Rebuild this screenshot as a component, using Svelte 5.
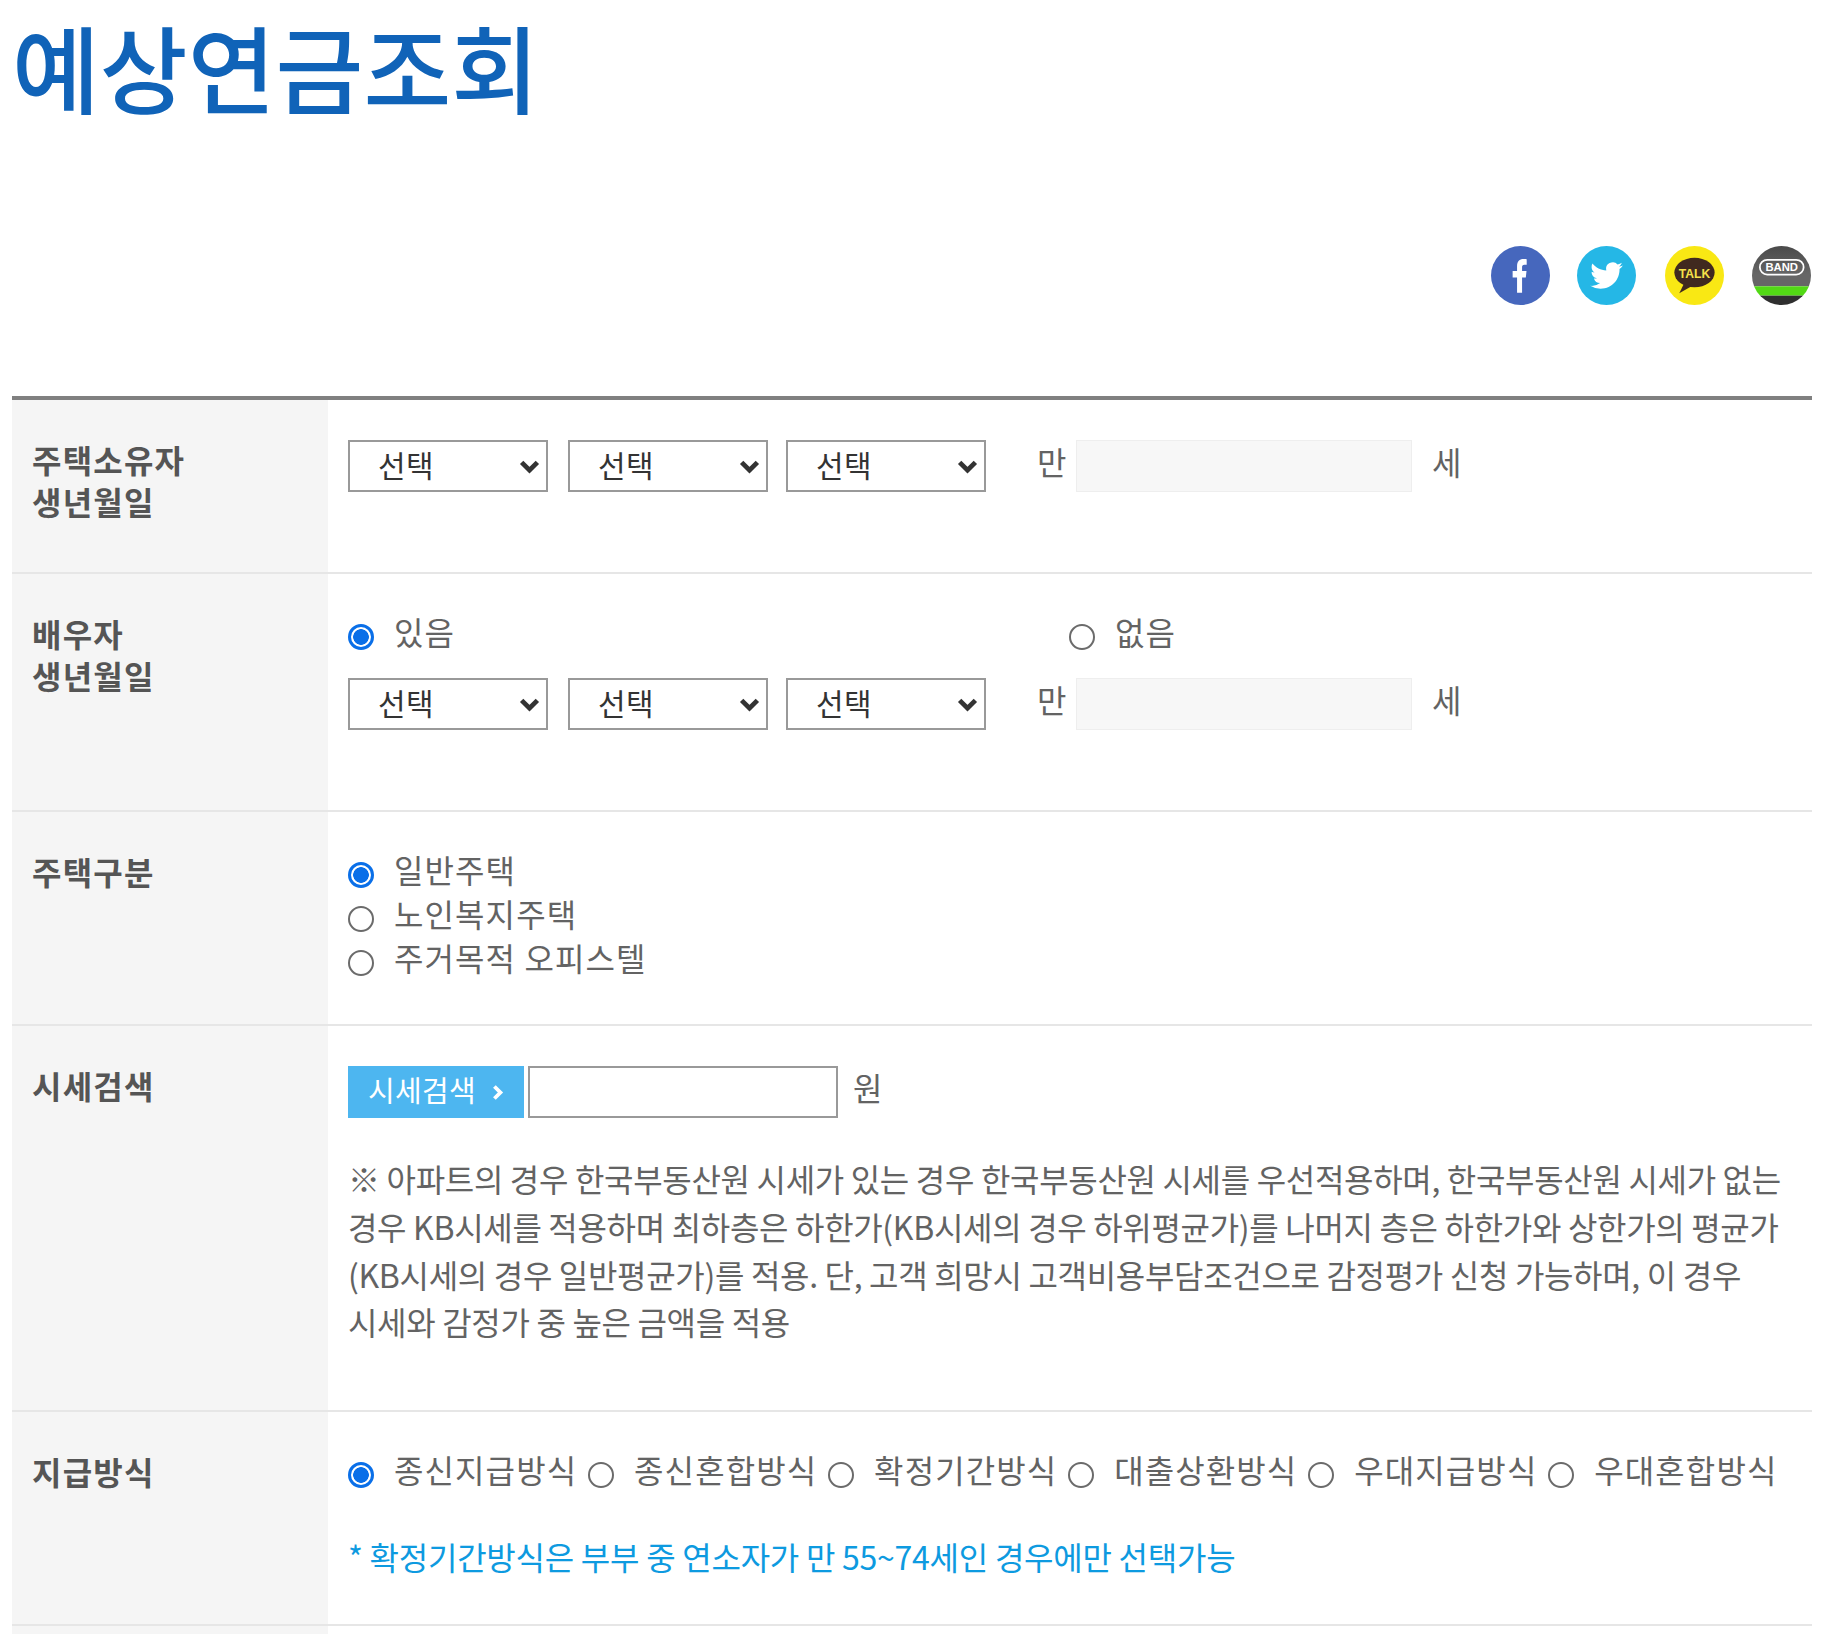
<script lang="ts">
  const payTypes = ['종신지급방식', '종신혼합방식', '확정기간방식', '대출상환방식', '우대지급방식', '우대혼합방식'];
  const houseTypes = ['일반주택', '노인복지주택', '주거목적 오피스텔'];
</script>

{#snippet birthSelects(name: string)}
  <div class="birth">
    {#each ['y', 'm', 'd'] as part}
      <div class="select-wrap">
        <select name={name + part}><option>선택</option></select>
        <svg class="chevron" viewBox="0 0 16 12" aria-hidden="true">
          <path d="M2 2.500 8 8.500l6-6" fill="none" stroke="#333" stroke-width="3.600" />
        </svg>
      </div>
    {/each}
    <span class="man">만</span>
    <input class="age" type="text" readonly />
    <span class="sae">세</span>
  </div>
{/snippet}

<div class="page">
  <h1>예상연금조회</h1>

  <div class="share">
    <svg viewBox="0 0 60 60" aria-label="facebook">
      <circle cx="30" cy="30" r="30" fill="#4667bd" />
      <path d="M26.500 47.500V32H22v-6.500h4.500v-5c0-4.800 2.500-7.200 6.500-7.200 1.600 0 2.800.1 3.300.2v5.600H34c-1.900 0-2.400 1-2.400 2.600v3.800h4.500l-.7 6.500h-3.800v15.500z" fill="#fff" />
    </svg>
    <svg viewBox="0 0 60 60" aria-label="twitter">
      <circle cx="30" cy="30" r="30" fill="#25b7e6" />
      <g transform="translate(13.500 13.500) scale(1.38)">
        <path fill="#fff" d="M23.953 4.570a10 10 0 01-2.825.775 4.958 4.958 0 002.163-2.723c-.951.555-2.005.959-3.127 1.184a4.920 4.920 0 00-8.384 4.482C7.690 8.095 4.067 6.130 1.640 3.162a4.822 4.822 0 00-.666 2.475c0 1.710.870 3.213 2.188 4.096a4.904 4.904 0 01-2.228-.616v.060a4.923 4.923 0 003.946 4.827 4.996 4.996 0 01-2.212.085 4.936 4.936 0 004.604 3.417 9.867 9.867 0 01-6.102 2.105c-.390 0-.779-.023-1.170-.067a13.995 13.995 0 007.557 2.209c9.053 0 13.998-7.496 13.998-13.985 0-.210 0-.420-.015-.630A9.935 9.935 0 0024 4.590z" />
      </g>
    </svg>
    <svg viewBox="0 0 60 60" aria-label="kakao talk">
      <circle cx="30" cy="30" r="30" fill="#f9e814" />
      <ellipse cx="30" cy="27" rx="20.500" ry="15" fill="#40291f" />
      <path d="M19 39 14.500 48 27 41z" fill="#40291f" />
      <text x="14" y="33" textLength="32" lengthAdjust="spacingAndGlyphs" class="talk">TALK</text>
    </svg>
    <svg viewBox="0 0 60 60" aria-label="band">
      <defs>
        <clipPath id="band-clip"><circle cx="30" cy="30" r="30" /></clipPath>
        <linearGradient id="band-grey" x1="0" y1="0" x2="0" y2="1">
          <stop offset="0" stop-color="#4a4a4a" />
          <stop offset="0.7" stop-color="#666" />
        </linearGradient>
      </defs>
      <g clip-path="url(#band-clip)">
        <rect width="60" height="41" fill="url(#band-grey)" />
        <rect y="41" width="60" height="9.500" fill="#52d915" />
        <rect y="50.500" width="60" height="10" fill="#2f2f2f" />
      </g>
      <rect x="8" y="14" width="44.500" height="15" rx="7.500" fill="none" stroke="#fff" stroke-width="1.800" />
      <text x="30.200" y="25.800" text-anchor="middle" class="band">BAND</text>
    </svg>
  </div>

  <div class="form">
    <div class="row row-birth">
      <div class="label">주택소유자<br />생년월일</div>
      <div class="cell">
        {@render birthSelects('owner')}
      </div>
    </div>

    <div class="row row-spouse">
      <div class="label">배우자<br />생년월일</div>
      <div class="cell">
        <div class="spouse-radios">
          <label class="radio spouse-yes"><input type="radio" name="spouse" checked /><span>있음</span></label>
          <label class="radio"><input type="radio" name="spouse" /><span>없음</span></label>
        </div>
        {@render birthSelects('spouse')}
      </div>
    </div>

    <div class="row row-house">
      <div class="label">주택구분</div>
      <div class="cell house-list">
        {#each houseTypes as house, i}
          <label class="radio"><input type="radio" name="house" checked={i === 0} /><span>{house}</span></label>
        {/each}
      </div>
    </div>

    <div class="row row-price">
      <div class="label">시세검색</div>
      <div class="cell">
        <div class="price-search">
          <button type="button" class="search-btn">
            시세검색
            <svg viewBox="0 0 10 14" aria-hidden="true"><path d="M2 2l5 5-5 5" fill="none" stroke="#fff" stroke-width="3.200" /></svg>
          </button>
          <input class="price" type="text" />
          <span class="won">원</span>
        </div>
        <p class="notice">※ 아파트의 경우 한국부동산원 시세가 있는 경우 한국부동산원 시세를 우선적용하며, 한국부동산원 시세가 없는 경우 KB시세를 적용하며 최하층은 하한가(KB시세의 경우 하위평균가)를 나머지 층은 하한가와 상한가의 평균가(KB시세의 경우 일반평균가)를 적용. 단, 고객 희망시 고객비용부담조건으로 감정평가 신청 가능하며, 이 경우 시세와 감정가 중 높은 금액을 적용</p>
      </div>
    </div>

    <div class="row row-pay">
      <div class="label">지급방식</div>
      <div class="cell">
        <div class="pay-list">
          {#each payTypes as pay, i}
            <label class="radio"><input type="radio" name="pay" checked={i === 0} /><span>{pay}</span></label>
          {/each}
        </div>
        <p class="pay-note">* 확정기간방식은 부부 중 연소자가 만 55~74세인 경우에만 선택가능</p>
      </div>
    </div>

    <div class="row row-stub">
      <div class="label"></div>
      <div class="cell"></div>
    </div>
  </div>
</div>

<style>
  :global(body) {
    margin: 0;
    background: #fff;
  }

  .page {
    width: 1800px;
    height: 1634px;
    overflow: hidden;
    padding: 0 10px 0 12px;
    font-family: 'Noto Sans CJK KR', 'Noto Sans', sans-serif;
    color: #636363;
    font-size: 32px;
    letter-spacing: 1.1px;
  }

  h1 {
    margin: 0;
    height: 135px;
    font-size: 95.500px;
    line-height: 131px;
    font-weight: 500;
    color: #1063b8;
    letter-spacing: 0;
  }

  .share {
    display: flex;
    justify-content: flex-end;
    gap: 28px;
    padding: 111px 1px 0 0;
    height: 150px;
  }

  .share svg {
    width: 59px;
    height: 59px;
  }

  .share svg:nth-child(2) {
    margin-left: -1px;
    margin-right: 1px;
  }

  .talk {
    font: 700 13.500px 'Liberation Sans', sans-serif;
    fill: #f5e24a;
    letter-spacing: 0;
  }

  .band {
    font: 700 11.500px 'Liberation Sans', sans-serif;
    fill: #fff;
    letter-spacing: 0;
  }

  .form {
    border-top: 4px solid #808080;
  }

  .row {
    display: grid;
    grid-template-columns: 316px 1fr;
    border-bottom: 2px solid #e6e6e6;
    box-sizing: border-box;
  }

  .row-birth { height: 174px; }
  .row-spouse { height: 238px; }
  .row-house { height: 214px; }
  .row-price { height: 386px; }
  .row-pay { height: 214px; }
  .row-stub { height: 20px; border-bottom: 0; }

  .label {
    background: #f5f5f5;
    padding: 38px 0 0 20px;
    font-weight: 700;
    line-height: 42px;
    color: #555;
    letter-spacing: 1.200px;
  }

  .cell {
    padding: 40px 0 0 20px;
    min-width: 0;
  }

  .birth {
    display: flex;
    align-items: flex-start;
  }

  .select-wrap {
    position: relative;
    width: 200px;
    height: 52px;
    margin-right: 20px;
  }

  .select-wrap:nth-child(2) {
    margin-right: 18px;
  }

  select {
    appearance: none;
    width: 100%;
    height: 100%;
    border: 2px solid #999;
    border-radius: 0;
    background: #fff;
    padding: 0 0 8px 28px;
    font: inherit;
    font-size: 30px;
    letter-spacing: 0.500px;
    color: #333;
  }

  .chevron {
    position: absolute;
    right: 8px;
    top: 19px;
    width: 21px;
    height: 16px;
  }

  .man {
    margin-left: 31px;
    width: 39px;
    line-height: 42px;
  }

  .age {
    width: 336px;
    height: 52px;
    box-sizing: border-box;
    border: 1px solid #eee;
    background: #f7f7f7;
    padding: 0;
  }

  .sae {
    margin-left: 20px;
    line-height: 42px;
  }

  .radio {
    display: inline-flex;
    align-items: flex-start;
    line-height: 44px;
  }

  .radio input {
    appearance: none;
    flex: none;
    box-sizing: border-box;
    width: 26px;
    height: 26px;
    margin: 15px 20px 0 0;
    border: 2px solid #6b6b6b;
    border-radius: 50%;
    background: #fff;
  }

  .radio input:checked {
    border: 3px solid #0a6fe8;
    background: radial-gradient(circle, #0a6fe8 0 7.500px, #fff 8.100px);
  }

  .spouse-radios {
    display: flex;
    margin: -5px 0 25px;
  }

  .spouse-yes {
    width: 721px;
  }

  .house-list {
    display: flex;
    flex-direction: column;
    align-items: flex-start;
    padding-top: 35px;
  }

  .price-search {
    display: flex;
    align-items: flex-start;
  }

  .search-btn {
    display: flex;
    align-items: center;
    gap: 16px;
    width: 176px;
    height: 52px;
    padding: 0 0 7px 20px;
    border: 0;
    background: #4db6f0;
    color: #fff;
    font: inherit;
    font-size: 29px;
    letter-spacing: 0.300px;
    line-height: 44px;
  }

  .search-btn svg {
    width: 12px;
    height: 17px;
    margin-top: 7px;
  }

  .price {
    width: 310px;
    height: 52px;
    box-sizing: border-box;
    margin-left: 4px;
    border: 2px solid #999;
    background: #fff;
    padding: 0;
  }

  .won {
    margin-left: 15px;
    line-height: 42px;
  }

  .notice {
    margin: 37px 0 0;
    width: 1440px;
    line-height: 47.800px;
    font-size: 32px;
    letter-spacing: -0.320px;
    word-break: keep-all;
  }

  .pay-list {
    display: flex;
    gap: 10.800px;
  }

  .pay-note {
    margin: 43px 0 0;
    line-height: 44px;
    color: #0d9ae0;
    font-size: 32px;
    letter-spacing: -0.250px;
  }

  .row-pay .cell {
    padding-top: 35px;
  }
</style>
